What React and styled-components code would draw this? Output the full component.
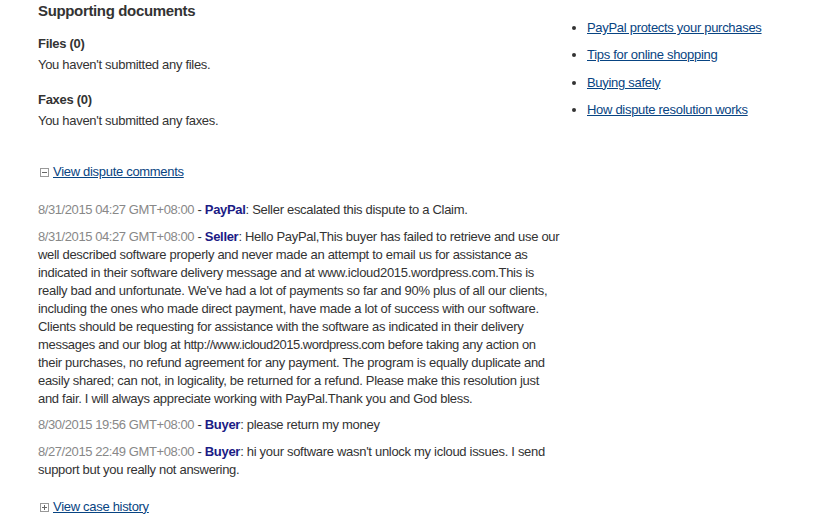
import styled, { createGlobalStyle } from 'styled-components'

const GlobalStyle = createGlobalStyle`
  body {
    margin: 0;
    background: #fff;
    font-family: "Liberation Sans", Arial, sans-serif;
    font-size: 13px;
    letter-spacing: -0.3px;
    color: #333;
  }
`

const Page = styled.div`
  display: flex;
  padding: 0 0 0 38px;
  width: 822px;
  box-sizing: border-box;
`

const Main = styled.div`
  width: 523px;
`

const Side = styled.ul`
  margin: 19px 0 0 11px;
  padding: 0 0 0 15px;
  list-style: disc;

  li {
    line-height: 18px;
    margin-bottom: 9.3px;
    color: #333;
    font-size: 13px;
  }
`

const Link = styled.a`
  color: #084482;
  text-decoration: underline;
  cursor: pointer;
`

const Heading = styled.h2`
  margin: 1px 0 14px;
  font-size: 15px;
  font-weight: bold;
  line-height: 20px;
  letter-spacing: -0.35px;
  color: #333;
`

const SubHeading = styled.h3`
  margin: 0 0 3px;
  font-size: 13px;
  font-weight: bold;
  line-height: 18px;
  color: #333;
`

const Para = styled.p`
  margin: 0 0 ${({ $gap }) => $gap || 0}px;
  line-height: 18px;
`

const Toggle = styled.div`
  display: flex;
  align-items: center;
  gap: 4px;
  margin: ${({ $top }) => $top}px 0 0 2px;
  line-height: 18px;
`

const Box = styled.svg`
  width: 9px;
  height: 9px;
  flex: none;
  margin-top: 1px;
`

const Comments = styled.div`
  margin: 20px 0 0;
`

const Comment = styled.p`
  margin: 0 0 8.5px;
  line-height: 18px;
`

const Stamp = styled.span`
  color: #888;
  letter-spacing: -0.42px;
`

const Author = styled.b`
  color: #1b1b85;
`

const Url = styled.span`
  letter-spacing: -0.5px;
`

function ToggleBox({ open }) {
  return (
    <Box viewBox="0 0 9 9">
      <rect x="0.5" y="0.5" width="8" height="8" fill="#fff" stroke="#999" />
      <line x1="2" y1="4.5" x2="7" y2="4.5" stroke="#666" />
      {!open && <line x1="4.5" y1="2" x2="4.5" y2="7" stroke="#666" />}
    </Box>
  )
}

const comments = [
  {
    date: '8/31/2015 04:27 GMT+08:00',
    who: 'PayPal',
    text: 'Seller escalated this dispute to a Claim.',
  },
  {
    date: '8/31/2015 04:27 GMT+08:00',
    who: 'Seller',
    text: (
      <>
        Hello PayPal,This buyer has failed to retrieve and use our well described software properly and never made an attempt to email us for assistance as indicated in their software delivery message and at www.icloud2015.wordpress.com.This is really bad and unfortunate. We've had a lot of payments so far and 90% plus of all our clients, including the ones who made direct payment, have made a lot of success with our software. Clients should be requesting for assistance with the software as indicated in their delivery messages and our blog at{' '}
        <Url>http://www.icloud2015.wordpress.com</Url> before taking any action on their purchases, no refund agreement for any payment. The program is equally duplicate and easily shared; can not, in logicality, be returned for a refund. Please make this resolution just and fair. I will always appreciate working with PayPal.Thank you and God bless.
      </>
    ),
  },
  {
    date: '8/30/2015 19:56 GMT+08:00',
    who: 'Buyer',
    text: 'please return my money',
  },
  {
    date: '8/27/2015 22:49 GMT+08:00',
    who: 'Buyer',
    text: "hi your software wasn't unlock my icloud issues. I send support but you really not answering.",
  },
]

const links = [
  'PayPal protects your purchases',
  'Tips for online shopping',
  'Buying safely',
  'How dispute resolution works',
]

export default function App() {
  return (
    <>
      <GlobalStyle />
      <Page>
        <Main>
          <Heading>Supporting documents</Heading>
          <SubHeading>Files (0)</SubHeading>
          <Para $gap={17}>You haven't submitted any files.</Para>
          <SubHeading>Faxes (0)</SubHeading>
          <Para>You haven't submitted any faxes.</Para>

          <Toggle $top={33}>
            <ToggleBox open />
            <Link>View dispute comments</Link>
          </Toggle>

          <Comments>
            {comments.map((c, i) => (
              <Comment key={i}>
                <Stamp>{c.date}</Stamp> - <Author>{c.who}</Author>: {c.text}
              </Comment>
            ))}
          </Comments>

          <Toggle $top={19}>
            <ToggleBox />
            <Link>View case history</Link>
          </Toggle>
        </Main>
        <Side>
          {links.map((l) => (
            <li key={l}>
              <Link>{l}</Link>
            </li>
          ))}
        </Side>
      </Page>
    </>
  )
}
